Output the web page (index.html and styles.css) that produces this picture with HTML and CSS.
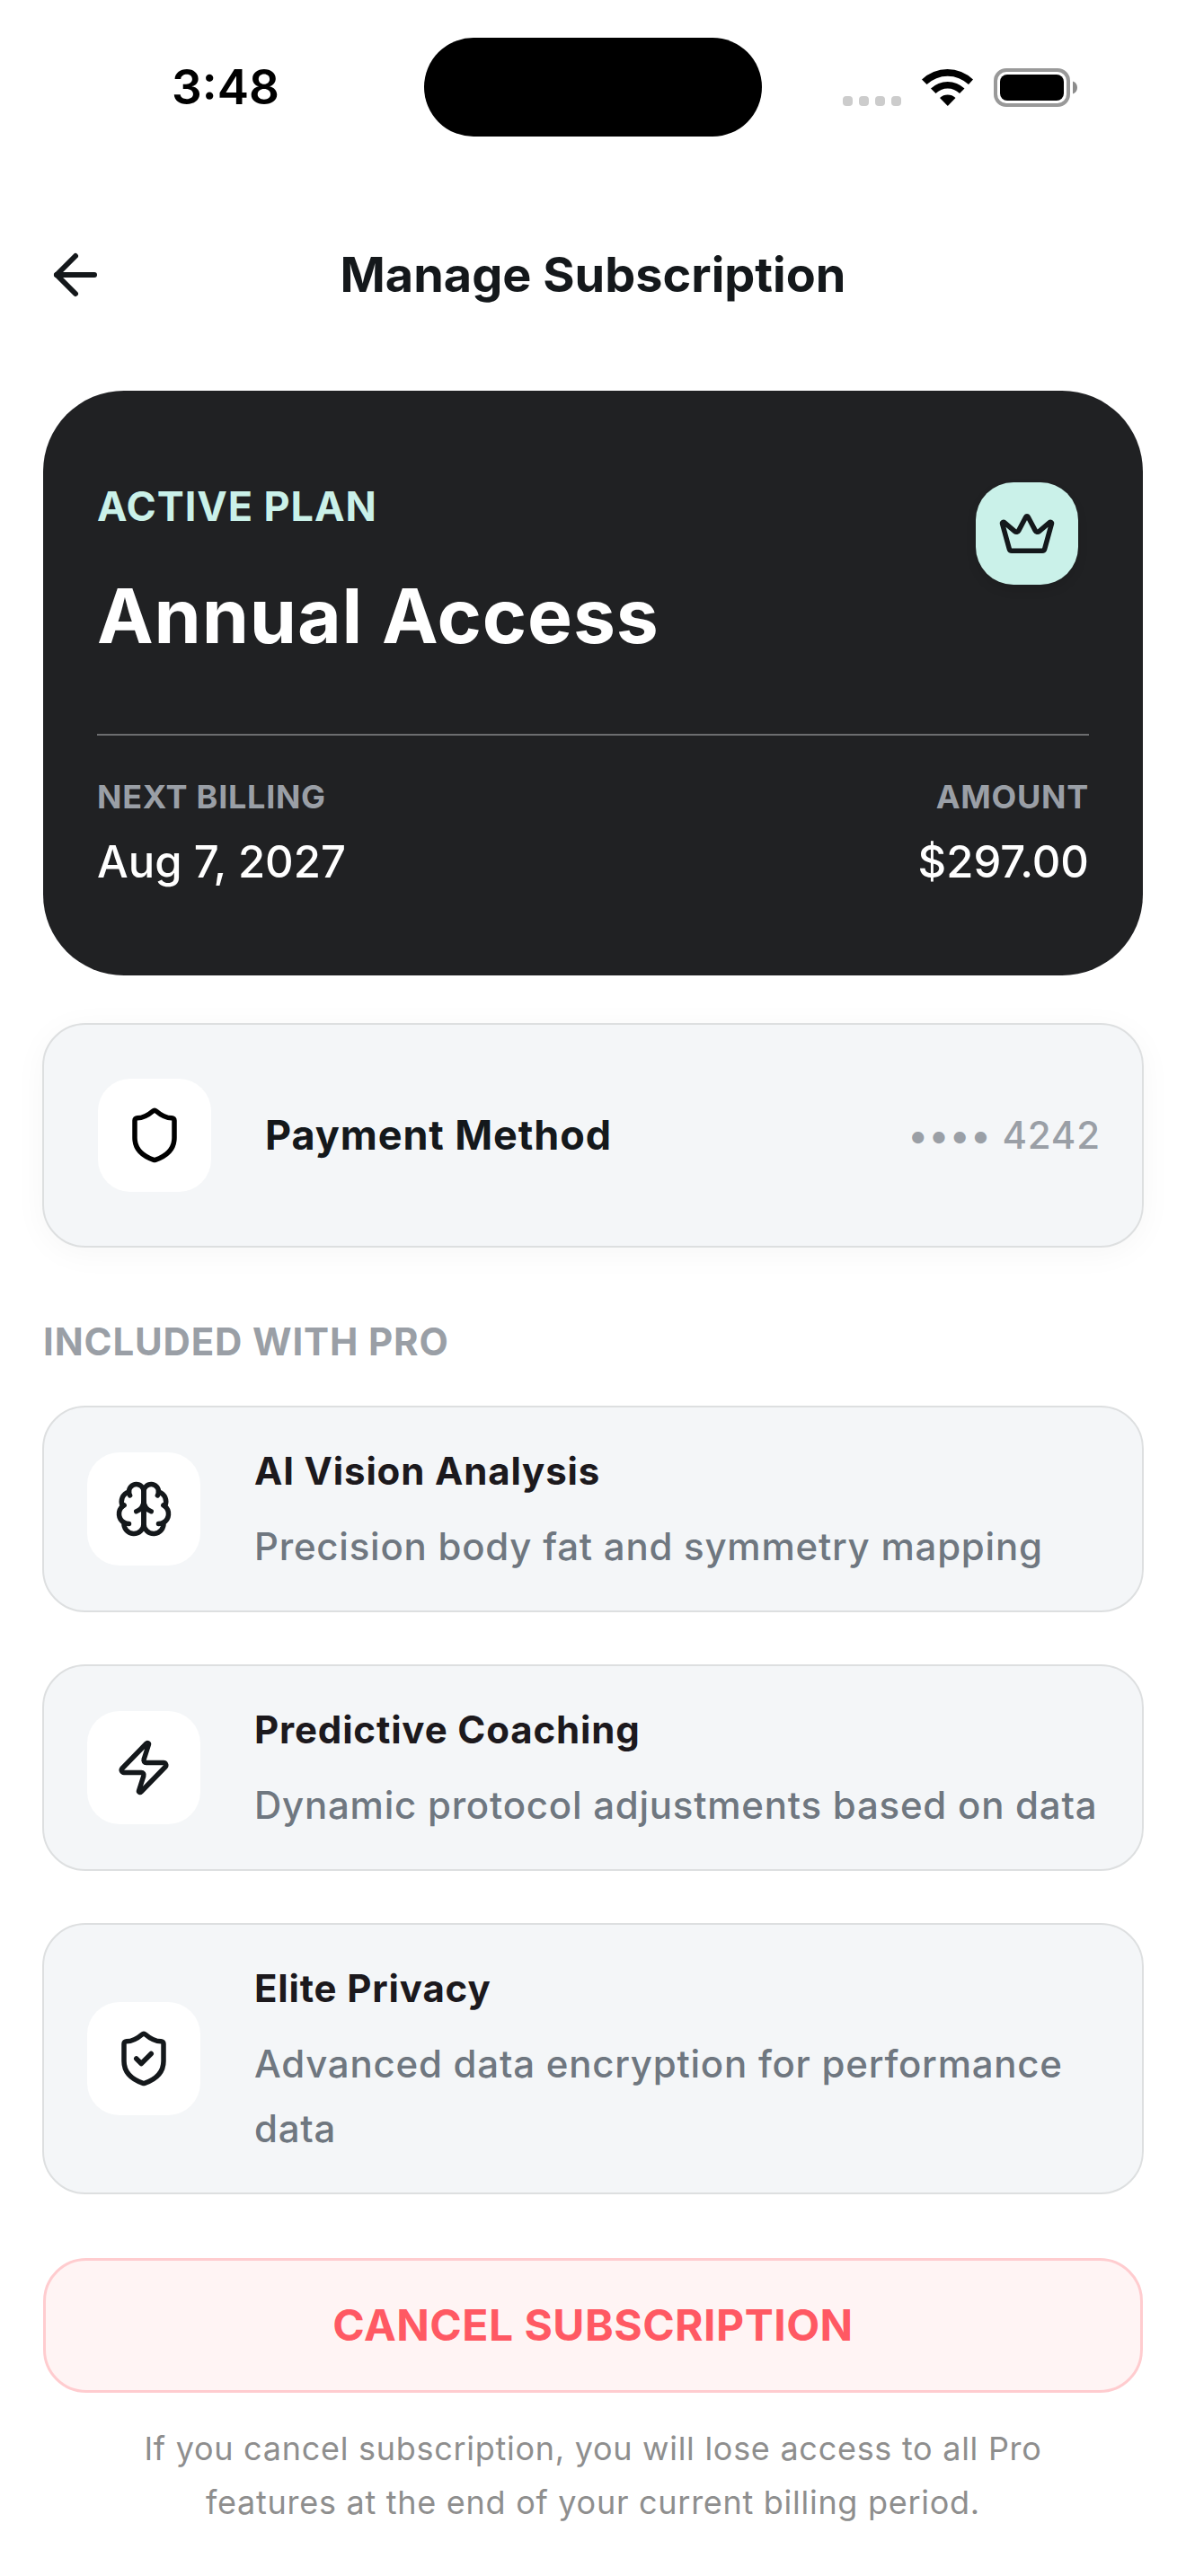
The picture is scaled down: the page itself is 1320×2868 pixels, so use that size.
FILE: index.html
```html
<!DOCTYPE html>
<html lang="en">

<head>
    <meta charset="UTF-8">
    <meta name="viewport" content="width=device-width, initial-scale=1.0">
    <title>Manage Subscription</title>
    <link rel="stylesheet" href="styles.css">
</head>

<body>
    <div class="status-bar">
        <div class="time">3:48</div>
        <div class="island"></div>
        <div class="indicators">
            <svg class="signal" width="66" height="12" viewBox="0 0 66 12" fill="#cccccc">
                <rect x="0" y="0" width="11" height="11" rx="4" />
                <rect x="18" y="0" width="11" height="11" rx="4" />
                <rect x="36" y="0" width="11" height="11" rx="4" />
                <rect x="54" y="0" width="11" height="11" rx="4" />
            </svg>
            <svg width="58" height="43" viewBox="0 0 58 43">
                <path d="M0 12.500A41 41 0 0 1 57 12.500L52 18A34 34 0 0 0 5.500 18Z" />
                <path d="M10 22.500A27 27 0 0 1 47.500 22.500L42 28A19 19 0 0 0 15.500 28Z" />
                <path d="M20 33A13 13 0 0 1 37.500 33L28.800 42Z" />
            </svg>
            <svg width="94" height="43" viewBox="0 0 94 43">
                <rect x="2" y="2" width="81" height="39" rx="12" fill="none" stroke="#999999" stroke-width="4" />
                <rect x="7" y="7" width="71" height="29" rx="8" />
                <path d="M88 14.500C91 15.500 93 18 93 21.500S91 27.500 88 28.500Z" fill="#8c8c8c" />
            </svg>
        </div>
    </div>

    <header class="header">
        <button class="back" type="button" aria-label="Back">
            <svg class="icon" width="72" height="72" viewBox="0 0 24 24">
                <path d="m12 19-7-7 7-7" />
                <path d="M19 12H5" />
            </svg>
        </button>
        <h1>Manage Subscription</h1>
    </header>

    <main class="container">
        <section class="plan">
            <div class="plan-top">
                <div>
                    <div class="plan-label">Active Plan</div>
                    <h2 class="plan-name">Annual Access</h2>
                </div>
                <div class="crown">
                    <svg class="icon" width="66" height="66" viewBox="0 0 24 24">
                        <path d="M11.562 5.266a.5.5 0 0 1 .876 0L15.390 10.870a1 1 0 0 0 1.516.294L21.183 7.500a.5.5 0 0 1 .798.519l-2.834 10.246a1 1 0 0 1-.956.734H5.810a1 1 0 0 1-.957-.734L2.020 8.020a.5.5 0 0 1 .798-.519l4.276 3.664a1 1 0 0 0 1.516-.294z" />
                    </svg>
                </div>
            </div>
            <div class="billing">
                <div>
                    <div class="billing-label">Next Billing</div>
                    <div class="billing-value">Aug 7, 2027</div>
                </div>
                <div class="right">
                    <div class="billing-label">Amount</div>
                    <div class="billing-value">$297.00</div>
                </div>
            </div>
        </section>

        <section class="card payment">
            <div class="icon-box">
                <svg class="icon black" width="66" height="66" viewBox="0 0 24 24">
                    <path d="M20 13c0 5-3.500 7.500-7.660 8.950a1 1 0 0 1-.67-.01C7.500 20.500 4 18 4 13V6a1 1 0 0 1 1-1c2 0 4.500-1.200 6.240-2.720a1.170 1.170 0 0 1 1.520 0C14.510 3.810 17 5 19 5a1 1 0 0 1 1 1z" />
                </svg>
            </div>
            <h3 class="payment-title">Payment Method</h3>
            <span class="payment-number">•••• 4242</span>
        </section>

        <h2 class="section-title">Included with Pro</h2>

        <div class="features">
            <div class="card feature">
                <div class="icon-box">
                    <svg class="icon" width="66" height="66" viewBox="0 0 24 24">
                        <path d="M12 5a3 3 0 1 0-5.997.125 4 4 0 0 0-2.526 5.770 4 4 0 0 0 .556 6.588A4 4 0 1 0 12 18Z" />
                        <path d="M12 5a3 3 0 1 1 5.997.125 4 4 0 0 1 2.526 5.770 4 4 0 0 1-.556 6.588A4 4 0 1 1 12 18Z" />
                        <path d="M15 13a4.500 4.500 0 0 1-3-4 4.500 4.500 0 0 1-3 4" />
                        <path d="M17.599 6.500a3 3 0 0 0 .399-1.375" />
                        <path d="M6.003 5.125A3 3 0 0 0 6.401 6.500" />
                        <path d="M3.477 10.896a4 4 0 0 1 .585-.396" />
                        <path d="M19.938 10.500a4 4 0 0 1 .585.396" />
                        <path d="M6 18a4 4 0 0 1-1.967-.516" />
                        <path d="M19.967 17.484A4 4 0 0 1 18 18" />
                    </svg>
                </div>
                <div class="feature-text">
                    <h3>AI Vision Analysis</h3>
                    <p>Precision body fat and symmetry mapping</p>
                </div>
            </div>
            <div class="card feature">
                <div class="icon-box">
                    <svg class="icon" width="66" height="66" viewBox="0 0 24 24">
                        <path d="M4 14a1 1 0 0 1-.78-1.630l9.900-10.200a.5.5 0 0 1 .86.460l-1.920 6.020A1 1 0 0 0 13 10h7a1 1 0 0 1 .78 1.630l-9.900 10.200a.5.5 0 0 1-.86-.460l1.920-6.020A1 1 0 0 0 11 14z" />
                    </svg>
                </div>
                <div class="feature-text">
                    <h3>Predictive Coaching</h3>
                    <p>Dynamic protocol adjustments based on data</p>
                </div>
            </div>
            <div class="card feature">
                <div class="icon-box">
                    <svg class="icon" width="66" height="66" viewBox="0 0 24 24">
                        <path d="M20 13c0 5-3.500 7.500-7.660 8.950a1 1 0 0 1-.67-.01C7.500 20.500 4 18 4 13V6a1 1 0 0 1 1-1c2 0 4.500-1.200 6.240-2.720a1.170 1.170 0 0 1 1.520 0C14.510 3.810 17 5 19 5a1 1 0 0 1 1 1z" />
                        <path d="m9 12 2 2 4-4" />
                    </svg>
                </div>
                <div class="feature-text">
                    <h3>Elite Privacy</h3>
                    <p>Advanced data encryption for performance data</p>
                </div>
            </div>
        </div>

        <button class="cancel" type="button">Cancel Subscription</button>
        <p class="note">If you cancel subscription, you will lose access to all Pro features at the end of your current billing period.</p>
    </main>
</body>

</html>
```
FILE: styles.css
```css
* {
    box-sizing: border-box;
}

body {
    font-family: Inter, "Liberation Sans", sans-serif;
    margin: 0;
    background-color: #fff;
    color: #14181b;
}

h1,
h2,
h3,
p {
    margin: 0;
}

button {
    font-family: inherit;
    cursor: pointer;
}

.icon {
    display: block;
    fill: none;
    stroke: #14181b;
    stroke-width: 2;
    stroke-linecap: round;
    stroke-linejoin: round;
}

.icon.black {
    stroke: #000;
}

.status-bar {
    display: grid;
    grid-template-columns: 1fr 376px 1fr;
    align-items: center;
    padding: 42px 48px 0;
}

.time {
    color: #000;
    font-size: 53px;
    font-weight: 600;
    line-height: 60px;
    text-align: center;
    padding-right: 18px;
}

.island {
    height: 110px;
    border-radius: 55px;
    background-color: #000;
}

.indicators {
    display: flex;
    justify-content: flex-end;
    gap: 22px;
    padding-right: 72px;
}

.signal {
    align-self: flex-end;
}

.header {
    position: relative;
    display: flex;
    align-items: center;
    justify-content: center;
    height: 120px;
    margin-top: 94px;
}

.header h1 {
    font-size: 54px;
    font-weight: 700;
    line-height: 66px;
}

.back {
    position: absolute;
    left: 48px;
    padding: 0;
    border: none;
    background: none;
}

.container {
    padding: 69px 48px 24px;
}

.plan {
    padding: 96px 60px;
    border-radius: 90px;
    background-color: #202123;
    color: #fff;
}

.plan-top {
    display: flex;
    justify-content: space-between;
    padding: 6px 12px 80px 0;
}

.plan-label {
    color: #caf1e9;
    font-size: 45px;
    font-weight: 700;
    line-height: 54px;
    letter-spacing: 0.02em;
    text-transform: uppercase;
}

.plan-name {
    margin-top: 44px;
    font-size: 84px;
    font-weight: 700;
    line-height: 102px;
    letter-spacing: 0.01em;
}

.crown {
    display: flex;
    align-items: center;
    justify-content: center;
    width: 114px;
    height: 114px;
    border-radius: 42px;
    background-color: #caf1e9;
    box-shadow: 0 6px 12px rgba(0, 0, 0, 0.1);
}

.billing {
    display: flex;
    justify-content: space-between;
    padding-top: 44px;
    border-top: 2px solid #6c6d6f;
}

.right {
    text-align: right;
}

.billing-label {
    color: #9a9fa6;
    font-size: 36px;
    font-weight: 700;
    line-height: 48px;
    letter-spacing: 0.02em;
    text-transform: uppercase;
}

.billing-value {
    margin-top: 19px;
    font-size: 49px;
    font-weight: 500;
    line-height: 60px;
}

.card {
    display: flex;
    align-items: center;
    margin: 0 -1px;
    border: 2px solid #dddfe0;
    border-radius: 48px;
    background-color: #f4f6f8;
}

.icon-box {
    display: flex;
    align-items: center;
    justify-content: center;
    flex: none;
    width: 126px;
    height: 126px;
    border-radius: 36px;
    background-color: #fff;
}

.payment {
    margin-top: 53px;
    padding: 60px 46px 60px 60px;
    box-shadow: 0 6px 36px rgba(0, 0, 0, 0.04);
}

.payment-title {
    flex: 1;
    margin-left: 60px;
    font-size: 45px;
    font-weight: 700;
    line-height: 54px;
    letter-spacing: 0.02em;
}

.payment-number {
    color: #9a9fa6;
    font-size: 42px;
    font-weight: 500;
    line-height: 54px;
    letter-spacing: 0.02em;
}

.section-title {
    margin-top: 78px;
    color: #9a9fa6;
    font-size: 42px;
    font-weight: 700;
    line-height: 54px;
    letter-spacing: 0.02em;
    text-transform: uppercase;
}

.features {
    display: flex;
    flex-direction: column;
    gap: 58px;
    margin-top: 44px;
}

.feature {
    padding: 35px 36px 35px 48px;
}

.feature-text {
    flex: 1;
    margin-left: 60px;
}

.feature-text h3 {
    color: #1c191d;
    font-size: 42px;
    font-weight: 700;
    line-height: 72px;
    letter-spacing: 0.02em;
}

.feature-text p {
    margin-top: 12px;
    color: #6f7780;
    font-size: 42px;
    font-weight: 500;
    line-height: 72px;
    letter-spacing: 0.018em;
}

.cancel {
    display: block;
    width: 100%;
    margin-top: 71px;
    padding: 42px 48px;
    border: 3px solid #ffcccf;
    border-radius: 48px;
    background-color: #fff4f4;
    color: #ff5963;
    font-size: 48px;
    font-weight: 700;
    line-height: 60px;
    letter-spacing: 0.01em;
    text-transform: uppercase;
}

.note {
    margin-top: 32px;
    padding: 0 96px;
    color: #8e8e8e;
    font-size: 36px;
    line-height: 60px;
    letter-spacing: 0.02em;
    text-align: center;
}
```
